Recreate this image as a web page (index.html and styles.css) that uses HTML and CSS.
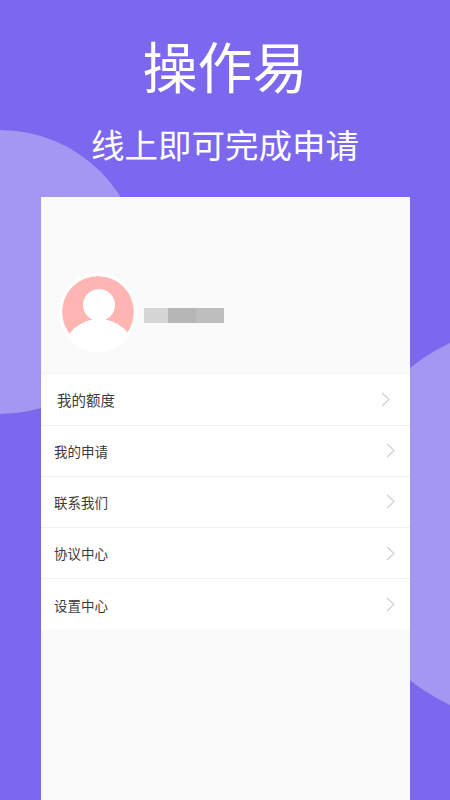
FILE: index.html
```html
<!DOCTYPE html>
<html lang="zh-CN">
<head>
  <meta charset="UTF-8">
  <meta name="viewport" content="width=device-width, initial-scale=1.0">
  <title>操作易</title>
  <link rel="stylesheet" href="styles.css">
</head>
<body>
  <div class="page">
    <!-- 背景圆 -->
    <div class="circle circle-left"></div>
    <div class="circle circle-right"></div>

    <div class="header">
      <h1>操作易</h1>
      <p>线上即可完成申请</p>
    </div>

    <div class="card">
      <div class="profile">
        <svg class="avatar" width="80" height="80" viewBox="0 0 80 80">
          <defs>
            <clipPath id="avatarClip"><circle cx="40" cy="40" r="36"/></clipPath>
          </defs>
          <circle cx="40" cy="40" r="39.5" fill="#fff"/>
          <circle cx="40" cy="40" r="36" fill="#ffb6b3"/>
          <g clip-path="url(#avatarClip)" fill="#fff">
            <circle cx="41" cy="33" r="16"/>
            <ellipse cx="41" cy="79" rx="35" ry="32"/>
          </g>
          <circle cx="40" cy="40" r="37.5" fill="none" stroke="#fff" stroke-width="3"/>
          <path d="M10 64 A 36 36 0 0 0 70 64 Z" fill="#fff"/>
        </svg>
        <div class="name-mask">
          <span class="mask-a"></span>
          <span class="mask-b"></span>
          <span class="mask-c"></span>
        </div>
      </div>

      <ul class="menu">
        <li class="menu-item first">
          <span>我的额度</span>
          <svg class="arrow" width="9" height="15" viewBox="0 0 9 15"><path d="M1 1l7 6.5-7 6.5"/></svg>
        </li>
        <li class="menu-item">
          <span>我的申请</span>
          <svg class="arrow" width="9" height="15" viewBox="0 0 9 15"><path d="M1 1l7 6.5-7 6.5"/></svg>
        </li>
        <li class="menu-item">
          <span>联系我们</span>
          <svg class="arrow" width="9" height="15" viewBox="0 0 9 15"><path d="M1 1l7 6.5-7 6.5"/></svg>
        </li>
        <li class="menu-item">
          <span>协议中心</span>
          <svg class="arrow" width="9" height="15" viewBox="0 0 9 15"><path d="M1 1l7 6.5-7 6.5"/></svg>
        </li>
        <li class="menu-item">
          <span>设置中心</span>
          <svg class="arrow" width="9" height="15" viewBox="0 0 9 15"><path d="M1 1l7 6.5-7 6.5"/></svg>
        </li>
      </ul>
    </div>
  </div>
</body>
</html>
```
FILE: styles.css
```css
* {
  box-sizing: border-box;
}
body {
  margin: 0;
  font-family: "Noto Sans CJK SC", "Noto Sans", sans-serif;
}
.page {
  position: relative;
  width: 450px;
  height: 800px;
  overflow: hidden;
  background-color: #7b68ee;
}
.circle {
  position: absolute;
  border-radius: 50%;
  background-color: #a497f1;
}
.circle-left {
  left: -142px;
  top: 130px;
  width: 284px;
  height: 284px;
}
.circle-right {
  left: 335px;
  top: 324px;
  width: 400px;
  height: 400px;
}
.header {
  position: relative;
  height: 197px;
  padding-top: 28px;
  text-align: center;
  color: #fff;
}
.header h1 {
  margin: 0;
  font-size: 55px;
  font-weight: 400;
  line-height: 72px;
}
.header p {
  margin: 21px 0 0;
  font-size: 33.5px;
  font-weight: 400;
  line-height: 46px;
}
.card {
  position: relative;
  width: 369px;
  height: 603px;
  margin-left: 41px;
  background-color: #fafafa;
}
.profile {
  display: flex;
  align-items: center;
  height: 177.5px;
  padding: 53px 0 0 17px;
}
.name-mask {
  display: flex;
  height: 15px;
  margin: 7px 0 0 6px;
}
.name-mask span {
  display: block;
  height: 15px;
}
.mask-a {
  width: 24px;
  background-color: #d6d6d6;
}
.mask-b {
  width: 28px;
  background-color: #b6b6b6;
}
.mask-c {
  width: 28px;
  background-color: #bebebe;
}
.menu {
  margin: 0;
  padding: 0;
  list-style: none;
  background-color: #fff;
}
.menu-item {
  display: flex;
  align-items: center;
  justify-content: space-between;
  height: 51.2px;
  padding: 0 15px 0 13px;
  border-bottom: 1px solid #f1f1f1;
  font-size: 13.5px;
  color: #3c3c3c;
}
.menu-item:last-child {
  border-bottom: none;
}
.menu-item.first {
  padding: 0 20px 0 16px;
  font-size: 14.5px;
}
.arrow {
  fill: none;
  stroke: #cfcfd6;
  stroke-width: 1.2;
}
```
